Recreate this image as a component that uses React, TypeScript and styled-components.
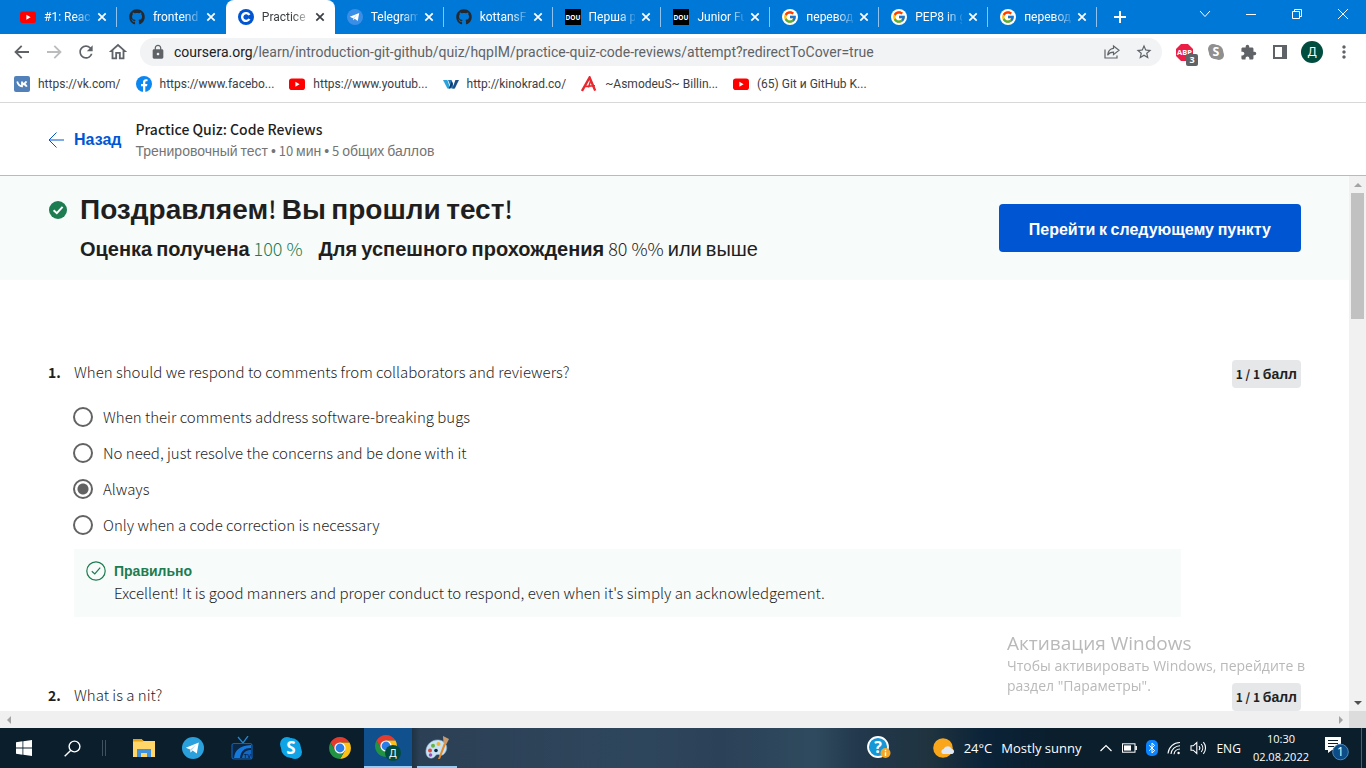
import React from "react";
import styled, { createGlobalStyle, css } from "styled-components";
import { FaGithub } from "react-icons/fa";
import { FcGoogle } from "react-icons/fc";
import { MdRefresh, MdOutlineHome, MdLock, MdStarBorder, MdExtension, MdMoreVert } from "react-icons/md";

const UI = `"Open Sans", "Noto Sans", sans-serif`;
const CHROME = `Roboto, "Open Sans", sans-serif`;
const LATIN = `"Noto Sans CJK SC", "Liberation Sans", sans-serif`;
const CYR = `"Liberation Sans", Arial, sans-serif`;

const Global = createGlobalStyle`
  *, *::before, *::after { box-sizing: border-box; }
  html, body { margin: 0; height: 100%; overflow: hidden; background: #fff; }
  #root { height: 100%; }
  button { font: inherit; color: inherit; background: none; border: 0; padding: 0; margin: 0; cursor: pointer; }
  a { color: inherit; text-decoration: none; }
  svg { display: block; flex: none; }
  h1, h2, p { margin: 0; font-weight: inherit; font-size: inherit; }
`;

const Screen = styled.div`
  display: flex;
  flex-direction: column;
  height: 100vh;
  font-family: ${UI};
`;

/* ---------- browser chrome ---------- */

const TabStrip = styled.div`
  display: flex;
  align-items: stretch;
  height: 34px;
  flex: none;
  padding-left: 8px;
  background: #0078d7;
  color: #fff;
`;

const Tabs = styled.div`
  display: flex;
  flex: 0 1 1089px;
  min-width: 0;
`;

const Tab = styled.div<{ $active?: boolean; $divider?: boolean }>`
  position: relative;
  display: flex;
  align-items: center;
  flex: 1 1 0;
  min-width: 0;
  padding: 0 7px 0 12px;
  gap: 8px;
  font-size: 12px;
  ${(p) =>
    p.$divider &&
    css`
      &::after {
        content: "";
        position: absolute;
        right: 0;
        top: 7px;
        height: 20px;
        width: 1px;
        background: #8fc3ee;
      }
    `}
  ${(p) =>
    p.$active &&
    css`
      background: #fff;
      color: #3c4043;
      border-radius: 8px 8px 0 0;
    `}
`;

const TabTitle = styled.span`
  flex: 1;
  min-width: 0;
  margin-right: -5px;
  overflow: hidden;
  white-space: nowrap;
  line-height: 16px;
  font-family: ${CHROME};
  mask-image: linear-gradient(to right, #000 65%, rgba(0, 0, 0, 0.15) 100%);
`;

const IconButton = styled.button<{ $size?: number }>`
  display: flex;
  align-items: center;
  justify-content: center;
  width: ${(p) => p.$size ?? 16}px;
  height: ${(p) => p.$size ?? 16}px;
  flex: none;
`;

const GoogleDisc = styled.span`
  display: flex;
  align-items: center;
  justify-content: center;
  width: 16px;
  height: 16px;
  flex: none;
  border-radius: 50%;
  background: #fff;
`;

const WindowControls = styled.div`
  display: flex;
  margin-left: auto;
  height: 28px;
`;

const WindowButton = styled.button`
  display: flex;
  align-items: center;
  justify-content: center;
  width: 46px;
`;

const Toolbar = styled.div`
  display: flex;
  align-items: center;
  height: 36px;
  flex: none;
  padding: 0 6px;
  color: #5f6368;
`;

const Nav = styled.div`
  display: flex;
  width: 134px;
`;

const AddressBar = styled.div`
  display: flex;
  align-items: center;
  flex: 1;
  min-width: 0;
  height: 28px;
  padding: 0 6px 0 10px;
  gap: 8px;
  border-radius: 14px;
  background: #f1f3f4;
`;

const Address = styled.span`
  flex: 1;
  font-family: ${CHROME};
  font-size: 14px;
  line-height: 20px;
  white-space: nowrap;
  overflow: hidden;
  b { font-weight: 400; color: #202124; }
`;

const Extensions = styled.div`
  display: flex;
  align-items: center;
  margin-left: 6px;
`;

const AbpBadge = styled.span`
  position: absolute;
  right: 2px;
  bottom: 2px;
  width: 12px;
  height: 12px;
  border-radius: 2px;
  background: #5f6368;
  color: #fff;
  font-size: 9px;
  font-weight: 700;
  line-height: 12px;
  text-align: center;
`;

const AbpButton = styled(IconButton)`
  position: relative;
`;

const Bookmarks = styled.nav`
  display: flex;
  align-items: center;
  height: 33px;
  flex: none;
  padding: 0 14px 4px;
  gap: 15px;
  border-bottom: 1px solid #d8d8d8;
  font-family: ${CHROME};
  font-size: 12px;
  color: #3c4043;
`;

const Bookmark = styled.a`
  display: flex;
  align-items: center;
  gap: 8px;
  white-space: nowrap;
  line-height: 16px;
`;

/* ---------- quiz page ---------- */

const Cyr = styled.span`
  font-family: ${CYR};
`;

const PageHeader = styled.header`
  display: flex;
  align-items: center;
  height: 73px;
  flex: none;
  padding: 2px 48px 0;
  border-bottom: 1px solid #bababa;
  font-family: ${LATIN};
`;

const Back = styled.a`
  display: flex;
  align-items: center;
  gap: 10px;
  color: #0056d2;
  font-weight: 700;
  font-size: 16px;
  line-height: 24px;
`;

const Titles = styled.div`
  margin-left: 14px;
  color: #1f1f1f;
`;

const QuizTitle = styled.h1`
  font-size: 14px;
  font-weight: 500;
  line-height: 22px;
`;

const QuizMeta = styled.p`
  font-size: 13px;
  line-height: 22px;
  color: #757575;
  ${Cyr} { font-size: 14px; }
`;

const Viewport = styled.div`
  display: flex;
  flex: 1;
  min-height: 0;
`;

const Page = styled.main`
  flex: 1;
  min-width: 0;
  overflow: hidden;
  font-family: ${LATIN};
  color: #1f1f1f;
`;

const Banner = styled.section`
  display: flex;
  align-items: flex-start;
  height: 104px;
  padding: 16px 48px 0 49px;
  background: #f7fbfa;
`;

const BannerIcon = styled.div`
  padding-top: 9px;
  width: 31px;
`;

const BannerText = styled.div`
  flex: 1;
  white-space: nowrap;
`;

const Congrats = styled.h2`
  font-size: 24px;
  line-height: 34px;
  font-weight: 500;
  ${Cyr} { font-size: 28px; font-weight: 700; }
`;

const Grades = styled.p`
  display: flex;
  gap: 16px;
  margin-top: 9px;
  font-size: 18px;
  line-height: 24px;
  font-weight: 300;
  ${Cyr} { font-size: 20px; }
  strong { font-weight: 700; }
  em { font-style: normal; color: #1d7c50; }
`;

const NextButton = styled.button`
  height: 48px;
  margin-top: 12px;
  padding: 0 30px;
  border-radius: 4px;
  background: #0056d2;
  color: #fff;
  font-size: 16px;
  font-weight: 700;
  white-space: nowrap;
`;

const Questions = styled.div`
  padding: 80px 48px 0;
  display: flex;
  flex-direction: column;
  gap: 66px;
`;

const Question = styled.section`
  display: grid;
  grid-template-columns: 26px minmax(0, 1fr) auto;
  align-items: start;
  font-size: 15px;
  line-height: 24px;
  color: #1f1f1f;
`;

const Number = styled.span`
  font-size: 14px;
  font-weight: 700;
`;

const Prompt = styled.p`
  font-weight: 300;
`;

const Points = styled.span`
  height: 28px;
  padding: 0 4px;
  border-radius: 4px;
  background: #e5e7e8;
  font-size: 12px;
  font-weight: 700;
  line-height: 28px;
  white-space: nowrap;
  ${Cyr} { font-size: 14px; }
`;

const Answers = styled.div`
  grid-column: 2 / 4;
  margin-top: 11px;
`;

const Option = styled.label`
  display: flex;
  align-items: center;
  height: 36px;
  gap: 10px;
  font-weight: 300;
`;

const Radio = styled.input`
  appearance: none;
  width: 20px;
  height: 20px;
  margin: 0 0 0 -1px;
  border: 2px solid #636363;
  border-radius: 50%;
  background: #fff;
  flex: none;
  &:checked { background: radial-gradient(circle, #636363 5px, #fff 6px); }
`;

const Feedback = styled.div`
  display: flex;
  gap: 8px;
  height: 68px;
  margin: 6px 120px 0 0;
  padding: 12px;
  background: #f7fbfa;
`;

const Correct = styled.p`
  color: #1d7c50;
  font-family: ${CYR};
  font-size: 14px;
  font-weight: 700;
  line-height: 20px;
`;

/* ---------- scroll bars ---------- */

const VBar = styled.div`
  display: flex;
  flex-direction: column;
  align-items: center;
  width: 17px;
  flex: none;
  background: #f1f1f1;
`;

const VThumb = styled.div`
  width: 13px;
  height: 126px;
  background: #c1c1c1;
`;

const ArrowBox = styled.div`
  display: flex;
  align-items: center;
  justify-content: center;
  width: 17px;
  height: 17px;
  flex: none;
`;

const Spacer = styled.div`
  flex: 1;
`;

const HBar = styled.div`
  display: flex;
  height: 17px;
  flex: none;
  background: #f0f0f0;
`;

const Corner = styled.div`
  width: 17px;
  background: #dcdcdc;
`;

/* ---------- desktop ---------- */

const Watermark = styled.aside`
  position: fixed;
  right: 42px;
  bottom: 72px;
  width: 317px;
  color: #b9b9b9;
  font-size: 14px;
  line-height: 20px;
  pointer-events: none;
  h2 { font-size: 19px; line-height: 26px; }
`;

const Taskbar = styled.footer`
  display: flex;
  height: 40px;
  flex: none;
  color: #fff;
  background: linear-gradient(to right, #0a1e2c 0, #0a1e2c 400px, #2c4055 420px, #2e465c 640px, #2b4157 720px, #2f4a5e 815px, #22384c 860px, #1f333f 930px, #0b2338 985px, #0a1e2c 1060px);
`;

const TaskButton = styled.button<{ $active?: boolean; $width?: number }>`
  display: flex;
  align-items: center;
  justify-content: center;
  width: ${(p) => p.$width ?? 49}px;
  height: 40px;
  flex: none;
  ${(p) => p.$active && css`background: #10508c; border-bottom: 2px solid #99ccf5; padding-top: 2px;`}
`;

const GripHandle = styled.span`
  display: flex;
  align-items: center;
  width: 17px;
  margin-left: 6px;
`;

const OpenMark = styled.span`
  display: flex;
  align-items: center;
  justify-content: center;
  width: 40px;
  height: 40px;
  padding-top: 2px;
  border-bottom: 2px solid #99ccf5;
`;

const Tray = styled.div`
  display: flex;
  align-items: center;
  margin-left: auto;
`;

const Weather = styled.div`
  display: flex;
  align-items: center;
  gap: 9px;
  margin: 0 18px 0 42px;
  font-size: 13px;
  white-space: nowrap;
`;

const TrayIcons = styled.div`
  display: flex;
  align-items: center;
  gap: 9px;
  font-size: 12px;
`;

const Clock = styled.time`
  margin: 0 14px 0 12px;
  font-size: 11px;
  line-height: 18px;
  text-align: center;
`;

const Edge = styled.span`
  width: 1px;
  height: 40px;
  margin: 0 4px 0 12px;
  background: #4e5f6c;
`;

/* ---------- icons ---------- */

const YouTube = () => (
  <svg width="16" height="16" viewBox="0 0 16 16">
    <rect x="0" y="2.5" width="16" height="11.5" rx="2.8" fill="#f00" />
    <path d="M6.4 5.8 10.6 8.2 6.4 10.7z" fill="#fff" />
  </svg>
);
const Coursera = () => (
  <svg width="16" height="16" viewBox="0 0 16 16">
    <circle cx="8" cy="8" r="8" fill="#0056d2" />
    <path d="M11.4 6A3.9 3.9 0 1 0 11.4 10" fill="none" stroke="#fff" strokeWidth="2.4" />
  </svg>
);
const Telegram = ({ size = 16, tone = "#3a8ee6" }: { size?: number; tone?: string }) => (
  <svg width={size} height={size} viewBox="0 0 22 22">
    <circle cx="11" cy="11" r="11" fill={tone} />
    <path d="M3.8 10.8 16.8 5.6 14.8 16.4 10.6 13.4 8.6 15.6 8.2 12.6z" fill="#fff" />
    <path d="M8.2 12.6 14.2 7.8 9.6 13.2 8.6 15.6z" fill="#b8d8ee" />
  </svg>
);
const Google = () => (
  <GoogleDisc><FcGoogle size={14} /></GoogleDisc>
);
const Dou = () => (
  <svg width="16" height="16" viewBox="0 0 16 16">
    <rect width="16" height="16" fill="#000" />
    <text x="8" y="10.5" textAnchor="middle" fontFamily="Open Sans, sans-serif" fontWeight="700" fontSize="6.5" fill="#fff">DOU</text>
  </svg>
);
const Cross = () => (
  <svg width="16" height="16" viewBox="0 0 16 16">
    <path d="M4.3 4.3 11.7 11.7M11.7 4.3 4.3 11.7" stroke="currentColor" strokeWidth="1.7" />
  </svg>
);
const Arrow = ({ flip, color }: { flip?: boolean; color: string }) => (
  <svg width="16" height="16" viewBox="0 0 16 16">
    <path d={flip ? "M1 8H14M8.3 1.8 14.5 8 8.3 14.2" : "M15 8H2M7.7 1.8 1.5 8 7.7 14.2"} fill="none" stroke={color} strokeWidth="1.8" />
  </svg>
);
const Share = () => (
  <svg width="16" height="16" viewBox="0 0 16 16" fill="none" stroke="#5f6368" strokeWidth="1.2">
    <path d="M1 5.5V14H13V11.5" />
    <path d="M9.5 2 15 6.3 9.5 10.6V8.2C6.8 8.2 5 9 3.6 11.2 4 7.3 6 4.7 9.5 4.3z" />
  </svg>
);
const Abp = () => (
  <svg width="17" height="17" viewBox="0 0 17 17">
    <path d="M5 0H12L17 5V12L12 17H5L0 12V5z" fill="#ed1e45" />
    <text x="8.5" y="11" textAnchor="middle" fontFamily="Open Sans, sans-serif" fontWeight="700" fontSize="7.5" fill="#fff">ABP</text>
  </svg>
);
const Skype = ({ size, tone, text }: { size: number; tone: string; text: string }) => (
  <svg width={size} height={size} viewBox="0 0 22 22">
    <circle cx="7" cy="7" r="7" fill={tone} />
    <circle cx="15" cy="15" r="7" fill={tone} />
    <circle cx="11" cy="11" r="10" fill={tone} />
    <text x="11" y="17" textAnchor="middle" fontFamily="Open Sans, sans-serif" fontWeight="700" fontSize="17" fill={text}>S</text>
  </svg>
);
const SidePanel = () => (
  <svg width="14" height="14" viewBox="0 0 14 14">
    <rect x="1" y="1" width="12" height="12" fill="none" stroke="#5f6368" strokeWidth="2" />
    <rect x="9" y="0" width="5" height="14" fill="#5f6368" />
  </svg>
);
const Avatar = () => (
  <svg width="22" height="22" viewBox="0 0 22 22">
    <circle cx="11" cy="11" r="11" fill="#004d40" />
    <text x="11" y="15" textAnchor="middle" fontFamily="Noto Sans, sans-serif" fontSize="12" fill="#fff">Д</text>
  </svg>
);
const Vk = () => (
  <svg width="16" height="16" viewBox="0 0 16 16">
    <rect width="16" height="16" rx="2" fill="#5181b8" />
    <path d="M3.2 5.5C4 8.4 5.5 10.2 8 10.3V5.5M12.4 5.3C11.8 6.8 10.6 7.9 8.2 8 10.6 8 12 9.2 12.8 10.7" fill="none" stroke="#fff" strokeWidth="1.8" />
  </svg>
);
const Facebook = () => (
  <svg width="16" height="16" viewBox="0 0 16 16">
    <circle cx="8" cy="8" r="8" fill="#0c86f0" />
    <path d="M7 16V10.3H5V8H7V6.4C7 4.3 8.2 3.2 10 3.2L11.5 3.3V5.3H10.4C9.6 5.3 9.3 5.8 9.3 6.4V8H11.4L11 10.3H9.3V16z" fill="#fff" />
  </svg>
);
const Kinokrad = () => (
  <svg width="16" height="16" viewBox="0 0 16 16">
    <path d="M0 4H4.4L7.4 12.5H4.4z" fill="#2aa3dc" />
    <path d="M5 4H8.6L11.4 12.5H8.4z" fill="#2679b8" />
    <path d="M7.4 12.5H5.6L8.8 5 10 8z" fill="#15396b" />
    <path d="M11.8 12.5H9.4L12.4 4H16z" fill="#1d4f86" />
  </svg>
);
const Asmodeus = () => (
  <svg width="16" height="16" viewBox="0 0 16 16" fill="none" stroke="#e8282f">
    <path d="M1 15 8.6 1.5 14.2 14.6" strokeWidth="2.4" />
    <path d="M4 10.4 14 9.8M7.4 11.5 9.6 5" strokeWidth="1.6" />
  </svg>
);
const BackArrow = () => (
  <svg width="16" height="16" viewBox="0 0 16 16" fill="none" stroke="#0056d2">
    <path d="M8.5 0.5 1 8 8.5 15.5M1 8H16" />
  </svg>
);
const CheckSolid = () => (
  <svg width="18" height="18" viewBox="0 0 18 18">
    <circle cx="9" cy="9" r="9" fill="#1d7c50" />
    <path d="M4.6 9.3 7.8 12.2 13.6 5.8" fill="none" stroke="#fff" strokeWidth="2" />
  </svg>
);
const CheckOutline = () => (
  <svg width="20" height="20" viewBox="0 0 20 20" fill="none" stroke="#1d7c50">
    <circle cx="10" cy="10" r="9.2" strokeWidth="1.2" />
    <path d="M5.8 10.2 8.8 13 14.2 6.6" strokeWidth="1.2" />
  </svg>
);
const Tri = ({ dir, color = "#a3a3a3" }: { dir: "up" | "down" | "left" | "right"; color?: string }) => {
  const d = { up: "M0 6 4 2 8 6z", down: "M0 2 4 6 8 2z", left: "M6 0 2 4 6 8z", right: "M2 0 6 4 2 8z" }[dir];
  return <svg width="8" height="8" viewBox="0 0 8 8"><path d={d} fill={color} /></svg>;
};
const Windows = () => (
  <svg width="16" height="16" viewBox="0 0 16 16" fill="#fff">
    <path d="M0 2.2 6.5 1.3V7.6H0zM7.3 1.2 16 0V7.6H7.3zM0 8.4H6.5V14.7L0 13.8zM7.3 8.4H16V16L7.3 14.8z" />
  </svg>
);
const Search = () => (
  <svg width="17" height="17" viewBox="0 0 17 17" fill="none" stroke="#fff" strokeWidth="1.4">
    <circle cx="10.5" cy="6.5" r="5.4" />
    <path d="M6.6 10.4 .7 16.3" />
  </svg>
);
const Grip = () => (
  <svg width="4" height="16" viewBox="0 0 4 16"><path d="M.5 0V16M3.5 0V16" stroke="#40515e" /></svg>
);
const Explorer = () => (
  <svg width="22" height="20" viewBox="0 0 22 20">
    <path d="M0 2H9L11 3H22V19H0z" fill="#ffd667" />
    <path d="M0 1H9L10 3.5H0z" fill="#e6a215" />
    <path d="M4 19V11H18V19H14V15H8V19z" fill="#3f92db" />
  </svg>
);
const Tv = () => (
  <svg width="22" height="24" viewBox="0 0 22 24">
    <path d="M7 1 12 7 17 0" fill="none" stroke="#2487ce" strokeWidth="1.3" />
    <rect x="1" y="7.5" width="20" height="15.5" rx="2" fill="#0a2746" stroke="#1060ae" strokeWidth="1.2" />
    <path d="M3 22C4 14 8 10 20 9V12C13 12 10 15 9 22z" fill="#1479db" />
    <path d="M11 22C12 16 15 14 20 14V22z" fill="#1268c4" />
    <text x="16.5" y="21.5" textAnchor="middle" fontFamily="Open Sans, sans-serif" fontWeight="700" fontSize="6" fill="#08284c">TV</text>
  </svg>
);
const ChromeLogo = ({ badge }: { badge?: boolean }) => (
  <svg width={badge ? 26 : 22} height={badge ? 26 : 22} viewBox={badge ? "0 0 26 26" : "0 0 22 22"}>
    <path d="M1.5 5.5A11 11 0 0 1 20.5 5.5H11L6.2 13.7z" fill="#e33b2e" />
    <path d="M20.5 5.5A11 11 0 0 1 11 22L15.8 13.7 11 5.5z" fill="#fbc116" />
    <path d="M1.5 5.5A11 11 0 0 0 11 22L15.8 13.7H6.2z" fill="#229342" />
    <circle cx="11" cy="11" r="5.6" fill="#fff" />
    <circle cx="11" cy="11" r="4.4" fill="#2b7de9" />
    {badge && (
      <>
        <circle cx="18" cy="18" r="8" fill="#004d40" />
        <text x="18" y="21.5" textAnchor="middle" fontFamily="Noto Sans, sans-serif" fontSize="10" fill="#fff">Д</text>
      </>
    )}
  </svg>
);
const Paint = () => (
  <svg width="24" height="24" viewBox="0 0 24 24">
    <path d="M1 17C0 9 7 3 14 4 22 5 24 13 19 18 16 21 14 17 11 19 8 24 2 23 1 17z" fill="#c9e3f2" stroke="#8db6cf" strokeWidth=".6" />
    <circle cx="5" cy="14.5" r="2" fill="#e04b3c" />
    <circle cx="8" cy="9.8" r="2" fill="#63b445" />
    <circle cx="13.5" cy="8" r="2" fill="#f2b632" />
    <circle cx="5.5" cy="19" r="1.8" fill="#9b4fc0" />
    <circle cx="11" cy="14.5" r="1.8" fill="#0a2b44" />
    <path d="M19 7 21 8 15 23 13 23z" fill="#e58a2b" />
    <path d="M18 0 24 3 21.5 8 18.5 7z" fill="#c99a6b" />
  </svg>
);
const Help = () => (
  <svg width="24" height="24" viewBox="0 0 24 24">
    <circle cx="11" cy="11" r="10" fill="#1596d6" stroke="#fff" strokeWidth="1.8" />
    <text x="11" y="17" textAnchor="middle" fontFamily="Open Sans, sans-serif" fontWeight="700" fontSize="16" fill="#fff">?</text>
    <circle cx="18.5" cy="17" r="5" fill="#f5a623" />
    <path d="M18.5 13.8V15.2M18.5 16.2V20" stroke="#fff" strokeWidth="1.4" />
  </svg>
);
const Sun = () => (
  <svg width="22" height="20" viewBox="0 0 22 20">
    <circle cx="10" cy="10" r="9.8" fill="#f9a61a" />
    <path d="M10 16A2.6 2.6 0 0 1 10.6 11 4.4 4.4 0 0 1 18.6 10.8 2.7 2.7 0 0 1 19.4 16z" fill="#dfe8f3" />
  </svg>
);
const Battery = () => (
  <svg width="15" height="10" viewBox="0 0 15 10">
    <rect x=".5" y=".8" width="12.5" height="8.4" fill="none" stroke="#fff" />
    <rect x="2" y="2.4" width="7" height="5.2" fill="#fff" />
    <rect x="13.3" y="3" width="1.6" height="4" fill="#fff" />
  </svg>
);
const Bluetooth = () => (
  <svg width="12" height="16" viewBox="0 0 12 16">
    <rect width="12" height="16" rx="5" fill="#0a84ff" />
    <path d="M3.2 5.3 8.6 10.6 6 13V3L8.6 5.4 3.2 10.7" fill="none" stroke="#fff" />
  </svg>
);
const Wifi = () => (
  <svg width="14" height="14" viewBox="0 0 14 14" fill="none" stroke="#fff" strokeWidth="1.1">
    <path d="M1 12.5A12 12 0 0 1 13 1.5M4 13A9 9 0 0 1 13 4.7M7 13.2A6 6 0 0 1 13 8" />
    <circle cx="11.6" cy="12" r="1.2" fill="#fff" stroke="none" />
  </svg>
);
const Volume = () => (
  <svg width="17" height="14" viewBox="0 0 17 14" fill="none" stroke="#fff" strokeWidth="1.1">
    <path d="M1 4.8H3.2L6.8 1.5V12.5L3.2 9.2H1z" />
    <path d="M9 5A3 3 0 0 1 9 9M11.2 3A6 6 0 0 1 11.2 11M13.4 1.2A9 9 0 0 1 13.4 12.8" />
  </svg>
);
const ActionCenter = () => (
  <svg width="26" height="26" viewBox="0 0 26 26">
    <path d="M2 2H18V15H9L5 18V15H2z" fill="#fff" />
    <path d="M5 5.5H15M5 8.5H15M5 11.5H11" stroke="#0a1e2c" />
    <circle cx="17.5" cy="17" r="7.8" fill="#0d4d87" stroke="#4a86b8" />
    <text x="17.5" y="21" textAnchor="middle" fontFamily="Open Sans, sans-serif" fontSize="12" fill="#fff">1</text>
  </svg>
);

/* ---------- content ---------- */

const Mixed = ({ children }: { children: string }) => (
  <>
    {children.split(/([А-Яа-яЁё•]+)/).map((part, i) => (i % 2 ? <Cyr key={i}>{part}</Cyr> : part))}
  </>
);

const tabs: { title: string; icon: React.ReactNode; active?: boolean }[] = [
  { title: "#1: Reac", icon: <YouTube /> },
  { title: "frontend", icon: <FaGithub size={16} color="#24292f" /> },
  { title: "Practice", icon: <Coursera />, active: true },
  { title: "Telegram", icon: <Telegram /> },
  { title: "kottansF", icon: <FaGithub size={16} color="#24292f" /> },
  { title: "Перша р", icon: <Dou /> },
  { title: "Junior Fu", icon: <Dou /> },
  { title: "перевод", icon: <Google /> },
  { title: "PEP8 in g", icon: <Google /> },
  { title: "перевод", icon: <Google /> },
];

const bookmarks = [
  { title: "https://vk.com/", icon: <Vk /> },
  { title: "https://www.facebo...", icon: <Facebook /> },
  { title: "https://www.youtub...", icon: <YouTube /> },
  { title: "http://kinokrad.co/", icon: <Kinokrad /> },
  { title: "~AsmodeuS~ Billin...", icon: <Asmodeus /> },
  { title: "(65) Git и GitHub K...", icon: <YouTube /> },
];

const options = [
  "When their comments address software-breaking bugs",
  "No need, just resolve the concerns and be done with it",
  "Always",
  "Only when a code correction is necessary",
];

export default function App() {
  return (
    <Screen>
      <Global />
      <TabStrip>
        <Tabs>
          {tabs.map((t, i) => (
            <Tab key={i} $active={t.active} $divider={!t.active && !tabs[i + 1]?.active}>
              {t.icon}
              <TabTitle>{t.title}</TabTitle>
              <IconButton aria-label="Close tab"><Cross /></IconButton>
            </Tab>
          ))}
        </Tabs>
        <WindowButton aria-label="New tab">
          <svg width="12" height="12" viewBox="0 0 12 12"><path d="M6 0V12M0 6H12" stroke="#fff" strokeWidth="2" /></svg>
        </WindowButton>
        <WindowControls>
          <WindowButton aria-label="Search tabs">
            <svg width="12" height="12" viewBox="0 0 12 12"><path d="M1 3 6 8.5 11 3" fill="none" stroke="#fff" /></svg>
          </WindowButton>
          <WindowButton aria-label="Minimize">
            <svg width="10" height="10" viewBox="0 0 10 10"><path d="M0 5.5H10" stroke="#fff" /></svg>
          </WindowButton>
          <WindowButton aria-label="Restore">
            <svg width="10" height="10" viewBox="0 0 10 10" fill="none" stroke="#fff"><path d="M.5 2.5H7.5V9.5H.5zM2.5 2.5V.5H9.5V7.5H7.5" /></svg>
          </WindowButton>
          <WindowButton aria-label="Close">
            <svg width="10" height="10" viewBox="0 0 10 10"><path d="M0 0 10 10M10 0 0 10" stroke="#fff" /></svg>
          </WindowButton>
        </WindowControls>
      </TabStrip>

      <Toolbar>
        <Nav>
          <IconButton $size={32} aria-label="Back"><Arrow color="#5f6368" /></IconButton>
          <IconButton $size={32} aria-label="Forward"><Arrow flip color="#babcbe" /></IconButton>
          <IconButton $size={32} aria-label="Reload"><MdRefresh size={20} /></IconButton>
          <IconButton $size={32} aria-label="Home"><MdOutlineHome size={22} /></IconButton>
        </Nav>
        <AddressBar>
          <MdLock size={16} />
          <Address><b>coursera.org</b>/learn/introduction-git-github/quiz/hqpIM/practice-quiz-code-reviews/attempt?redirectToCover=true</Address>
          <IconButton $size={24} aria-label="Share"><Share /></IconButton>
          <IconButton $size={24} aria-label="Bookmark"><MdStarBorder size={18} /></IconButton>
        </AddressBar>
        <Extensions>
          <AbpButton $size={32} aria-label="Adblock Plus"><Abp /><AbpBadge>3</AbpBadge></AbpButton>
          <IconButton $size={32} aria-label="Skype"><Skype size={16} tone="#8f8f8f" text="#fff" /></IconButton>
          <IconButton $size={32} aria-label="Extensions"><MdExtension size={17} /></IconButton>
          <IconButton $size={32} aria-label="Side panel"><SidePanel /></IconButton>
          <IconButton $size={32} aria-label="Profile"><Avatar /></IconButton>
          <IconButton $size={32} aria-label="Menu"><MdMoreVert size={20} /></IconButton>
        </Extensions>
      </Toolbar>

      <Bookmarks>
        {bookmarks.map((b) => (
          <Bookmark key={b.title} href="#">{b.icon}{b.title}</Bookmark>
        ))}
      </Bookmarks>

      <PageHeader>
        <Back href="#"><BackArrow /><Cyr>Назад</Cyr></Back>
        <Titles>
          <QuizTitle>Practice Quiz: Code Reviews</QuizTitle>
          <QuizMeta><Mixed>Тренировочный тест • 10 мин • 5 общих баллов</Mixed></QuizMeta>
        </Titles>
      </PageHeader>

      <Viewport>
        <Page>
          <Banner>
            <BannerIcon><CheckSolid /></BannerIcon>
            <BannerText>
              <Congrats><Mixed>Поздравляем! Вы прошли тест!</Mixed></Congrats>
              <Grades>
                <span><strong><Mixed>Оценка получена</Mixed></strong> <em>100 %</em></span>
                <span><strong><Mixed>Для успешного прохождения</Mixed></strong> <Mixed>80 %% или выше</Mixed></span>
              </Grades>
            </BannerText>
            <NextButton><Mixed>Перейти к следующему пункту</Mixed></NextButton>
          </Banner>
          <Questions>
            <Question>
              <Number>1.</Number>
              <Prompt>When should we respond to comments from collaborators and reviewers?</Prompt>
              <Points><Mixed>1 / 1 балл</Mixed></Points>
              <Answers>
                {options.map((o) => (
                  <Option key={o}>
                    <Radio type="radio" name="q1" defaultChecked={o === "Always"} />
                    {o}
                  </Option>
                ))}
                <Feedback>
                  <CheckOutline />
                  <div>
                    <Correct>Правильно</Correct>
                    <Prompt>Excellent! It is good manners and proper conduct to respond, even when it's simply an acknowledgement.</Prompt>
                  </div>
                </Feedback>
              </Answers>
            </Question>
            <Question>
              <Number>2.</Number>
              <Prompt>What is a nit?</Prompt>
              <Points><Mixed>1 / 1 балл</Mixed></Points>
            </Question>
          </Questions>
        </Page>
        <VBar>
          <ArrowBox><Tri dir="up" /></ArrowBox>
          <VThumb />
          <Spacer />
          <ArrowBox><Tri dir="down" color="#505050" /></ArrowBox>
        </VBar>
      </Viewport>
      <HBar>
        <ArrowBox><Tri dir="left" /></ArrowBox>
        <Spacer />
        <ArrowBox><Tri dir="right" /></ArrowBox>
        <Corner />
      </HBar>

      <Watermark>
        <h2>Активация Windows</h2>
        <p>Чтобы активировать Windows, перейдите в раздел "Параметры".</p>
      </Watermark>

      <Taskbar>
        <TaskButton $width={48} aria-label="Start"><Windows /></TaskButton>
        <TaskButton $width={48} aria-label="Search"><Search /></TaskButton>
        <GripHandle><Grip /></GripHandle>
        <TaskButton aria-label="File Explorer"><Explorer /></TaskButton>
        <TaskButton aria-label="Telegram"><Telegram size={22} tone="#2aa1dc" /></TaskButton>
        <TaskButton aria-label="TV"><Tv /></TaskButton>
        <TaskButton aria-label="Skype"><Skype size={22} tone="#0fa4e6" text="#fff" /></TaskButton>
        <TaskButton aria-label="Chrome"><ChromeLogo /></TaskButton>
        <TaskButton $width={48} $active aria-label="Chrome profile"><ChromeLogo badge /></TaskButton>
        <TaskButton aria-label="Paint"><OpenMark><Paint /></OpenMark></TaskButton>
        <Tray>
          <Help />
          <Weather><Sun /><span>24°C</span><span>Mostly sunny</span></Weather>
          <TrayIcons>
            <svg width="14" height="8" viewBox="0 0 14 8"><path d="M1.5 7 7 1.5 12.5 7" fill="none" stroke="#fff" strokeWidth="1.2" /></svg>
            <Battery /><Bluetooth /><Wifi /><Volume /><span>ENG</span>
          </TrayIcons>
          <Clock>10:30<br />02.08.2022</Clock>
          <ActionCenter />
          <Edge />
        </Tray>
      </Taskbar>
    </Screen>
  );
}
